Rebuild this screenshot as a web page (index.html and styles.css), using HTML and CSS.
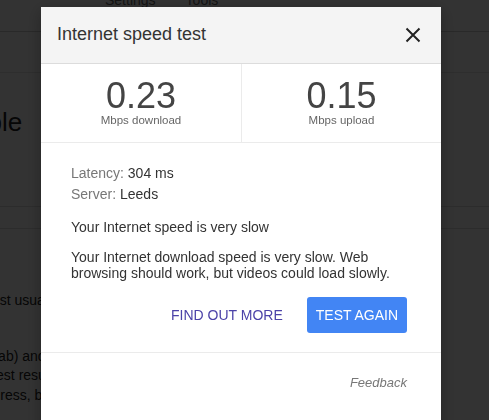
FILE: index.html
```html
<!DOCTYPE html>
<html lang="en">
<head>
    <meta charset="UTF-8">
    <meta name="viewport" content="width=device-width, initial-scale=1.0">
    <title>Internet speed test</title>
    <link rel="stylesheet" href="styles.css">
</head>
<body>

    <div class="page">
        <div class="topnav">
            <span>Settings</span>
            <span>Tools</span>
        </div>
        <div class="subnav"></div>
        <h1 class="page-title">Table</h1>
        <div class="tabs"></div>
        <p class="page-text">The test usually takes less than 30 seconds</p>
        <p class="page-text">
            (new tab) and<br>
            Your test results<br>
            IP address, b
        </p>
    </div>

    <div class="scrim"></div>

    <div class="dialog">
        <div class="dialog-header">
            <span class="dialog-title">Internet speed test</span>
            <button class="close" aria-label="Close">
                <svg width="16" height="16" viewBox="0 0 16 16">
                    <path d="M1.5 1.5 L14.5 14.5 M14.5 1.5 L1.5 14.5" stroke="#222" stroke-width="2" fill="none"/>
                </svg>
            </button>
        </div>

        <div class="stats">
            <div class="stat">
                <div class="stat-value">0.23</div>
                <div class="stat-label">Mbps download</div>
            </div>
            <div class="stat">
                <div class="stat-value">0.15</div>
                <div class="stat-label">Mbps upload</div>
            </div>
        </div>

        <div class="dialog-body">
            <div class="meta"><span class="meta-label">Latency:</span> 304 ms</div>
            <div class="meta"><span class="meta-label">Server:</span> Leeds</div>

            <p class="summary">Your Internet speed is very slow</p>
            <p class="summary">Your Internet download speed is very slow. Web browsing should work, but videos could load slowly.</p>

            <div class="actions">
                <button class="btn btn-link">FIND OUT MORE</button>
                <button class="btn btn-primary">TEST AGAIN</button>
            </div>
        </div>

        <div class="dialog-footer">
            <a class="feedback" href="#">Feedback</a>
        </div>
    </div>

</body>
</html>
```

FILE: styles.css
```css
body {
    font-family: 'Liberation Sans', Arial, sans-serif;
    margin: 0;
    background-color: #fff;
    overflow: hidden;
}

/* page behind the dialog, scrolled a little */
.page {
    margin: -10px 0 0 -40px;
    color: #222;
}

.topnav {
    height: 41px;
    border-bottom: 1px solid #ccc;
    margin-left: 40px;
    display: flex;
    gap: 30px;
    padding-left: 105px;
    font-size: 14px;
    line-height: 20px;
    color: #666;
}

.subnav {
    height: 40px;
    border-bottom: 1px solid #e4e4e4;
    margin-left: 40px;
}

.page-title {
    font-size: 26px;
    font-weight: normal;
    line-height: 32px;
    margin: 33px 0 0 0;
}

.tabs {
    height: 21px;
    margin: 68px 0 0 40px;
    border-top: 1px solid #ddd;
    border-bottom: 1px solid #ddd;
}

.page-text {
    width: 440px;
    font-size: 14px;
    line-height: 19.5px;
    margin: 62px 0 0 0;
}

.page-text + .page-text {
    margin-top: 36px;
}

.scrim {
    position: fixed;
    top: 0;
    left: 0;
    right: 0;
    bottom: 0;
    background-color: rgba(0, 0, 0, 0.8);
}

.dialog {
    position: fixed;
    top: 7px;
    left: 41px;
    width: 400px;
    height: 440px;
    background-color: #fff;
    color: #333;
    box-shadow: 0 4px 16px rgba(0, 0, 0, 0.3);
}

.dialog-header {
    height: 56px;
    background-color: #f4f4f4;
    border-bottom: 1px solid #dcdcdc;
    display: flex;
    align-items: center;
    justify-content: space-between;
    padding: 0 20px 0 16px;
}

.dialog-title {
    font-size: 18px;
    line-height: 21px;
    color: #333;
    margin-top: -1px;
}

.close {
    background: none;
    border: none;
    padding: 0;
    width: 16px;
    height: 16px;
    cursor: pointer;
}

.close svg {
    display: block;
}

.stats {
    display: grid;
    grid-template-columns: 1fr 1fr;
    border-bottom: 1px solid #ebebeb;
}

.stat {
    text-align: center;
    padding: 14px 0 15px;
}

.stat + .stat {
    border-left: 1px solid #ebebeb;
}

.stat-value {
    font-size: 36px;
    line-height: 36px;
    color: #444;
}

.stat-label {
    font-size: 11.5px;
    line-height: 13px;
    color: #666;
}

.dialog-body {
    padding: 20px 34px 19px 30px;
    border-bottom: 1px solid #ebebeb;
    font-size: 14px;
}

.meta {
    line-height: 21px;
    color: #333;
}

.meta-label {
    color: #777;
}

.summary {
    margin: 14px 0 0;
    line-height: 16px;
}

.actions {
    display: flex;
    justify-content: flex-end;
    gap: 15px;
    margin-top: 16px;
}

.btn {
    font-family: inherit;
    font-size: 14px;
    height: 36px;
    padding: 0 9px;
    border: none;
    border-radius: 3px;
    cursor: pointer;
}

.btn-link {
    background: none;
    color: #4b42a8;
}

.btn-primary {
    background-color: #4285f4;
    color: #fff;
}

.dialog-footer {
    padding: 20px 34px 0 30px;
    text-align: right;
}

.feedback {
    font-size: 13px;
    line-height: 16px;
    font-style: italic;
    color: #777;
    text-decoration: none;
}
```
